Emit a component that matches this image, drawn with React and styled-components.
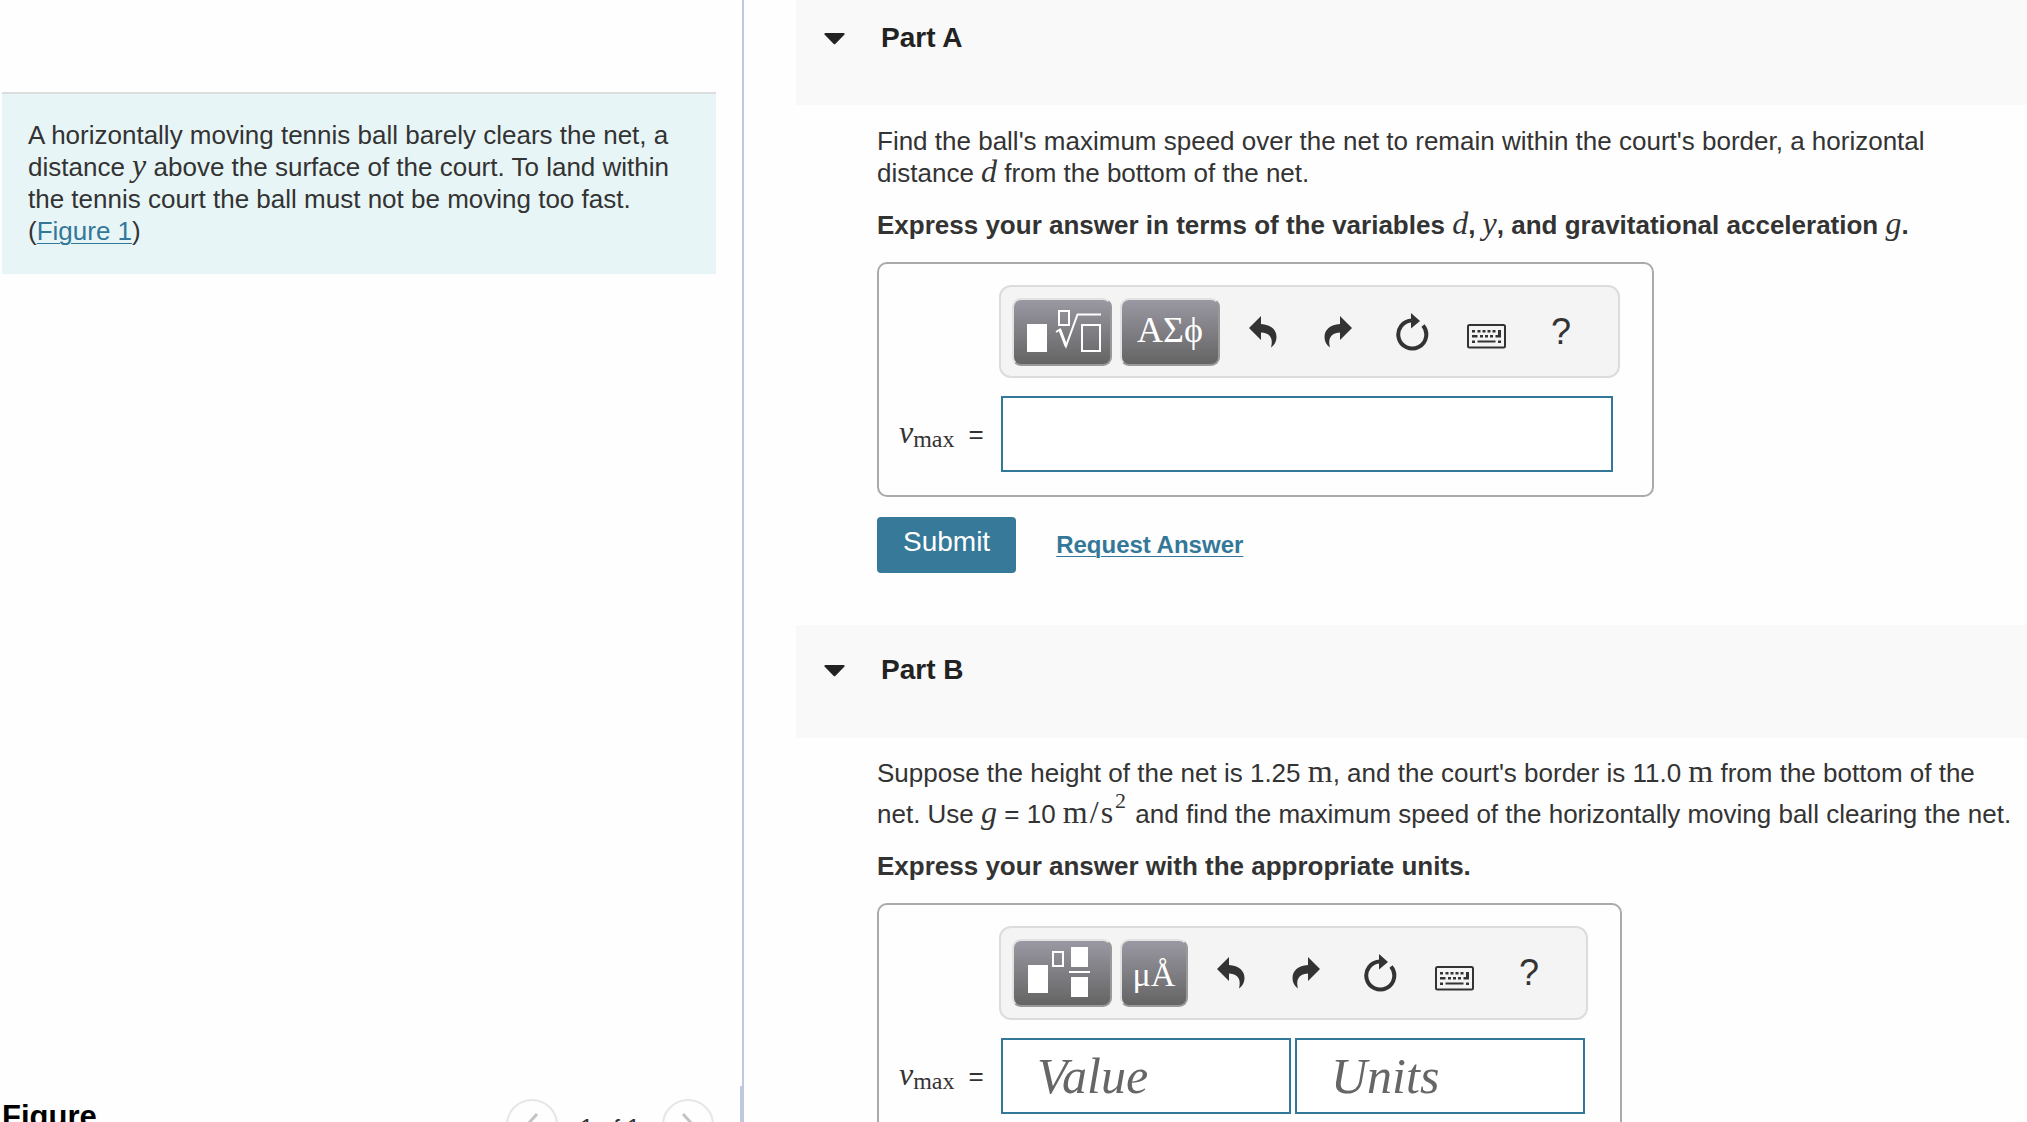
import React from "react";

import styled, { createGlobalStyle } from "styled-components";

const GlobalStyle = createGlobalStyle`
  * {
    box-sizing: border-box;
  }
  body {
    margin: 0;
    overflow: hidden;
    background: #fefefe;
    color: #333;
    font-family: "Liberation Sans", Arial, sans-serif;
    font-size: 26px;
    line-height: 32px;
  }
  button,
  input {
    font-family: inherit;
  }
`;

const Page = styled.div`
  display: grid;
  grid-template-columns: 744fr 1283fr;
  grid-template-rows: 100%;
  height: 100vh;
  overflow: hidden;
`;

const Sidebar = styled.aside`
  display: flex;
  flex-direction: column;
  min-height: 0;
`;

const ProblemPane = styled.div`
  flex: 1;
  padding: 92px 26px 0 2px;
  border-right: 2px solid #bcc9de;
`;

const Problem = styled.section`
  padding: 25px 26px 27px;
  background: #e8f5f6;
  border-top: 2px solid #ddd;
  p {
    margin: 0;
  }
`;

const Link = styled.a`
  color: #347899;
  text-decoration: underline;
  text-decoration-thickness: 1px;
  text-underline-offset: 3px;
`;

const FigurePane = styled.section`
  flex: 0 0 36px;
  display: flex;
  align-items: flex-start;
  justify-content: space-between;
  overflow: hidden;
  padding: 13px 26px 0 2px;
  border-right: 4px solid #bcc9de;
`;

const FigureTitle = styled.h2`
  margin: 0;
  color: #000;
  font-size: 31px;
  line-height: 36px;
`;

const Pager = styled.nav`
  display: flex;
  align-items: center;
  gap: 22px;
  font-size: 24px;
  span {
    padding-top: 6px;
  }
`;

const RoundButton = styled.button`
  display: flex;
  align-items: center;
  justify-content: center;
  width: 52px;
  height: 52px;
  padding: 0;
  border: 2px solid #e6e6e6;
  border-radius: 50%;
  background: #fefefe;
`;

const Main = styled.main`
  padding-left: 52px;
  min-width: 0;
`;

const PartHeader = styled.button`
  display: flex;
  align-items: flex-start;
  gap: 36px;
  width: 100%;
  height: ${(props) => (props.$first ? "105px" : "113px")};
  padding: ${(props) => (props.$first ? "22px" : "29px")} 28px 0;
  border: 0;
  background: #f9f9f9;
  color: #222;
  font-size: 28px;
  font-weight: 700;
  line-height: 32px;
  text-align: left;
  svg {
    margin-top: 11px;
  }
`;

const PartBody = styled.div`
  padding: ${(props) => (props.$first ? "20px" : "19px")} 0 52px 81px;
`;

const Text = styled.p`
  margin: ${(props) => (props.$loose ? "-4px 0 15px" : "0 0 20px")};
  line-height: ${(props) => (props.$loose ? "41px" : "32px")};
`;

const Hint = styled.p`
  margin: 0 0 21px;
  font-weight: 700;
`;

const MathText = styled.span`
  font-family: "Liberation Serif", serif;
  font-size: 32px;
  font-weight: 400;
  font-style: ${(props) => (props.$upright ? "normal" : "italic")};
  line-height: 0;
  sup {
    padding: 0 2px;
    font-size: 22px;
    line-height: 0;
    vertical-align: 15px;
  }
  sub {
    font-size: 24px;
    font-style: normal;
    line-height: 0;
    vertical-align: -4px;
  }
`;

const Slash = styled.span`
  padding: 0 2px;
`;

const AnswerBox = styled.div`
  display: inline-grid;
  grid-template-columns: 98px auto;
  column-gap: 2px;
  row-gap: 18px;
  align-items: center;
  padding: 21px 32px 23px 20px;
  border: 2px solid #aaa;
  border-radius: 10px;
  vertical-align: top;
`;

const Toolbar = styled.div`
  grid-column: 2;
  display: flex;
  align-items: center;
  width: ${(props) => (props.$wide ? "621px" : "589px")};
  height: ${(props) => (props.$wide ? "93px" : "94px")};
  padding: 0 11px;
  border: 2px solid #dcdcdc;
  border-radius: 12px;
  background: #f4f4f4;
`;

const PaletteButton = styled.button`
  display: flex;
  align-items: center;
  justify-content: center;
  flex-shrink: 0;
  width: ${(props) => (props.$narrow ? "68px" : "100px")};
  height: 68px;
  margin-right: 8px;
  padding: ${(props) => (props.$narrow ? "4px 0 0" : "0 0 4px")};
  border: 2px solid;
  border-color: #e2e2e2 #999 #999 #e2e2e2;
  border-radius: 9px;
  background: linear-gradient(#9a98a2, #646464);
  color: #fff;
  font-family: "Liberation Serif", serif;
  font-size: ${(props) => (props.$narrow ? "34px" : "36px")};
  line-height: 1;
`;

const Tools = styled.div`
  flex: 1;
  display: flex;
  align-items: center;
  justify-content: space-between;
  padding: 0 16px 0 5px;
`;

const IconButton = styled.button`
  display: flex;
  align-items: center;
  justify-content: center;
  width: 60px;
  height: 60px;
  padding: 0;
  border: 0;
  background: transparent;
  color: #333;
  font-size: 36px;
`;

const FieldLabel = styled.label`
  display: flex;
  align-items: baseline;
  gap: 14px;
  white-space: nowrap;
`;

const Fields = styled.div`
  display: flex;
  gap: 4px;
  padding: 0 ${(props) => (props.$wide ? "7px" : "3px")} 0 2px;
`;

const Field = styled.input`
  flex: 1;
  width: 0;
  min-width: 0;
  height: 76px;
  padding: 0 34px;
  border: 2px solid #347899;
  border-radius: 0;
  background: #fff;
  font-family: "Liberation Serif", serif;
  font-size: 50px;
  font-style: italic;
  &::placeholder {
    color: #666;
    opacity: 1;
  }
`;

const Actions = styled.div`
  display: flex;
  align-items: center;
  gap: 40px;
  margin-top: 20px;
`;

const SubmitButton = styled.button`
  height: 56px;
  padding: 0 26px 6px;
  border: 0;
  border-radius: 4px;
  background: #367999;
  color: #fff;
  font-size: 28px;
`;

const RequestLink = styled(Link)`
  font-size: 24px;
  font-weight: 700;
`;

function Caret() {
  return (
    <svg width="21" height="12" viewBox="0 0 21 12" fill="#222">
      <path d="M1.500 0H19.500Q21.500 0.500 20 2L11.500 10.800Q10.500 11.800 9.500 10.800L1 2Q-0.500 0.500 1.500 0Z" />
    </svg>
  );
}

function Chevron({ right }) {
  return (
    <svg width="14" height="24" viewBox="0 0 14 24" fill="none" stroke="#c4c4c4" strokeWidth="3">
      <path d={right ? "M2 1L12 12L2 23" : "M12 1L2 12L12 23"} />
    </svg>
  );
}

const ARROW = "M0 12L12 0V8C22 8.500 27.500 14 27.500 21C27.500 25.500 25.500 29 22 31.500C24 24 22.500 17 12 16.500V24Z";

function Undo() {
  return (
    <svg width="28" height="32" viewBox="0 0 28 32" fill="currentColor">
      <path d={ARROW} />
    </svg>
  );
}

function Redo() {
  return (
    <svg width="28" height="32" viewBox="2 0 28 32" fill="currentColor">
      <path d={ARROW} transform="translate(30 0) scale(-1 1)" />
    </svg>
  );
}

function Reset() {
  return (
    <svg width="34" height="38" viewBox="0 0 34 38">
      <path d="M28 12.500A14 14 0 1 1 17 7.500" fill="none" stroke="currentColor" strokeWidth="4" />
      <path d="M16 0L25 8L16 15.500Z" fill="currentColor" />
    </svg>
  );
}

function Keyboard() {
  return (
    <svg width="39" height="35" viewBox="0 -10 39 35" fill="currentColor">
      <rect x="1" y="1" width="37" height="22.500" rx="1.500" fill="none" stroke="currentColor" strokeWidth="2" />
      <path d="M5 6h3v2.500h-3zM10.500 6h3v2.500h-3zM15.500 6h3v2.500h-3zM20.500 6h3v2.500h-3zM25.500 6h3v2.500h-3zM31 6h3v7.500h-5.500v-2.500h2.500z" />
      <path d="M5 11h5.500v2.500h-5.500zM13 11h3v2.500h-3zM18 11h3v2.500h-3zM23 11h3v2.500h-3zM5 16.500h3v2.500h-3zM10.500 16.500h18v2h-18zM31 16.500h3v2.500h-3z" />
    </svg>
  );
}

function RootTemplate() {
  return (
    <svg width="78" height="50" viewBox="-3 -3 78 50" fill="none" stroke="#fff" strokeWidth="2">
      <rect x="1" y="16" width="20" height="28" fill="#fff" stroke="none" />
      <rect x="33" y="3" width="10" height="14" />
      <path d="M30 24L34 21.500L40 38L51.500 6.500H75" />
      <path d="M34 22L40 38" strokeWidth="3" />
      <rect x="56" y="17" width="18" height="26" />
    </svg>
  );
}

function FractionTemplate() {
  return (
    <svg width="76" height="56" viewBox="-1 -3 76 56" fill="#fff">
      <rect x="3" y="19" width="20" height="28" />
      <rect x="28" y="6" width="10" height="14" fill="none" stroke="#fff" strokeWidth="2" />
      <rect x="46" y="1" width="17" height="20" />
      <rect x="44" y="25" width="21" height="2" />
      <rect x="46" y="31" width="17" height="20" />
    </svg>
  );
}

function Variable({ children }) {
  return <MathText>{children}</MathText>;
}

function AnswerForm({ id, wide, palette, fields }) {
  return (
    <AnswerBox>
      <Toolbar $wide={wide} role="toolbar">
        {palette}
        <Tools>
          <IconButton type="button" aria-label="Undo">
            <Undo />
          </IconButton>
          <IconButton type="button" aria-label="Redo">
            <Redo />
          </IconButton>
          <IconButton type="button" aria-label="Reset">
            <Reset />
          </IconButton>
          <IconButton type="button" aria-label="Keyboard">
            <Keyboard />
          </IconButton>
          <IconButton type="button">?</IconButton>
        </Tools>
      </Toolbar>
      <FieldLabel htmlFor={id}>
        <MathText>
          v<sub>max</sub>
        </MathText>
        <span>=</span>
      </FieldLabel>
      <Fields $wide={wide}>
        {fields.map((name, i) => (
          <Field
            key={name}
            id={i === 0 ? id : `${id}-${i}`}
            type="text"
            placeholder={name}
            aria-label={name || undefined}
          />
        ))}
      </Fields>
    </AnswerBox>
  );
}

export default function App() {
  return (
    <>
      <GlobalStyle />
      <Page>
        <Sidebar>
          <ProblemPane>
            <Problem>
              <p>
                A horizontally moving tennis ball barely clears the net, a distance{" "}
                <Variable>y</Variable> above the surface of the court. To land within the tennis
                court the ball must not be moving too fast.
                <br />(<Link href="#figure">Figure 1</Link>)
              </p>
            </Problem>
          </ProblemPane>
          <FigurePane id="figure">
            <FigureTitle>Figure</FigureTitle>
            <Pager>
              <RoundButton type="button" aria-label="Previous figure">
                <Chevron />
              </RoundButton>
              <span>1 of 1</span>
              <RoundButton type="button" aria-label="Next figure">
                <Chevron right />
              </RoundButton>
            </Pager>
          </FigurePane>
        </Sidebar>

        <Main>
          <PartHeader $first type="button">
            <Caret />
            Part A
          </PartHeader>
          <PartBody $first>
            <Text>
              Find the ball's maximum speed over the net to remain within the court's border, a
              horizontal
              <br />
              distance <Variable>d</Variable> from the bottom of the net.
            </Text>
            <Hint>
              Express your answer in terms of the variables <Variable>d</Variable>,{" "}
              <Variable>y</Variable>, and gravitational acceleration <Variable>g</Variable>.
            </Hint>
            <AnswerForm
              id="part-a"
              wide
              fields={[""]}
              palette={
                <>
                  <PaletteButton type="button" aria-label="Templates">
                    <RootTemplate />
                  </PaletteButton>
                  <PaletteButton type="button">ΑΣϕ</PaletteButton>
                </>
              }
            />
            <Actions>
              <SubmitButton type="button">Submit</SubmitButton>
              <RequestLink href="#answer">Request Answer</RequestLink>
            </Actions>
          </PartBody>

          <PartHeader type="button">
            <Caret />
            Part B
          </PartHeader>
          <PartBody>
            <Text $loose>
              Suppose the height of the net is 1.25 <MathText $upright>m</MathText>, and the court's
              border is 11.0 <MathText $upright>m</MathText> from the bottom of the
              <br />
              net. Use <Variable>g</Variable> = 10{" "}
              <MathText $upright>
                m<Slash>/</Slash>s<sup>2</sup>
              </MathText>{" "}
              and find the maximum speed of the horizontally moving ball clearing the net.
            </Text>
            <Hint>Express your answer with the appropriate units.</Hint>
            <AnswerForm
              id="part-b"
              fields={["Value", "Units"]}
              palette={
                <>
                  <PaletteButton type="button" aria-label="Templates">
                    <FractionTemplate />
                  </PaletteButton>
                  <PaletteButton $narrow type="button">
                    μÅ
                  </PaletteButton>
                </>
              }
            />
          </PartBody>
        </Main>
      </Page>
    </>
  );
}
